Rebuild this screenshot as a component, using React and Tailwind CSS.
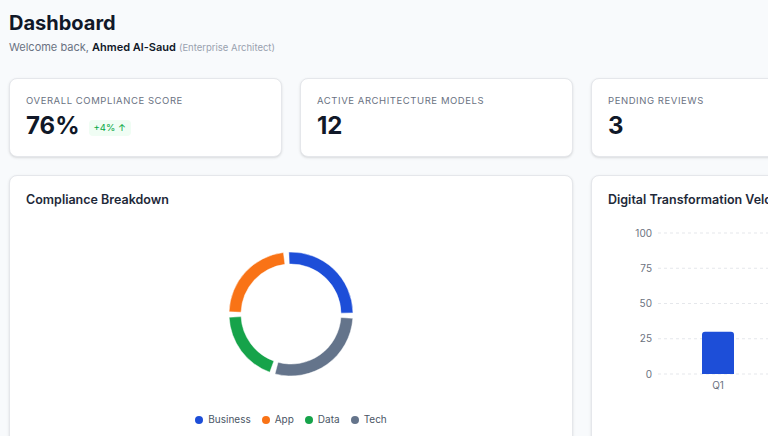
import React from 'react';

const stats = [
  { label: 'Overall Compliance Score', value: '76%', delta: '+4% ↑' },
  { label: 'Active Architecture Models', value: '12' },
  { label: 'Pending Reviews', value: '3' },
  { label: 'Open Risks', value: '5' }
];

// clockwise degrees from 12 o'clock
const slices = [
  { name: 'Business', color: '#1d4ed8', from: -2, to: 89 },
  { name: 'Tech', color: '#64748b', from: 94, to: 195 },
  { name: 'Data', color: '#16a34a', from: 200, to: 267 },
  { name: 'App', color: '#f97316', from: 272, to: 353 }
];

const legend = [
  { name: 'Business', color: 'bg-[#1d4ed8]' },
  { name: 'App', color: 'bg-[#f97316]' },
  { name: 'Data', color: 'bg-[#16a34a]' },
  { name: 'Tech', color: 'bg-[#64748b]' }
];

const velocity = [
  { q: 'Q1', v: 30 },
  { q: 'Q2', v: 45 },
  { q: 'Q3', v: 60 },
  { q: 'Q4', v: 78 }
];

const pt = (cx, cy, r, deg) => {
  const a = (deg * Math.PI) / 180;
  return [cx + r * Math.sin(a), cy - r * Math.cos(a)];
};

const arcPath = (cx, cy, ro, ri, from, to) => {
  const large = to - from > 180 ? 1 : 0;
  const [x1, y1] = pt(cx, cy, ro, from);
  const [x2, y2] = pt(cx, cy, ro, to);
  const [x3, y3] = pt(cx, cy, ri, to);
  const [x4, y4] = pt(cx, cy, ri, from);
  return `M${x1} ${y1} A${ro} ${ro} 0 ${large} 1 ${x2} ${y2} L${x3} ${y3} A${ri} ${ri} 0 ${large} 0 ${x4} ${y4} Z`;
};

const StatCard = ({ label, value, delta }) => (
  <div className="h-[79px] rounded-lg border border-gray-200 bg-white px-[16px] pt-[15px] shadow-sm">
    <div className="text-[9.5px] uppercase tracking-[0.06em] text-gray-500 leading-[14px]">{label}</div>
    <div className="mt-[2px] flex items-center gap-[9px]">
      <span className="text-[24px] font-bold leading-[32px] text-gray-900">{value}</span>
      {delta && (
        <span className="mt-[3px] rounded bg-green-50 px-[5px] py-[2px] text-[9.5px] leading-[12px] text-green-600">{delta}</span>
      )}
    </div>
  </div>
);

const Donut = () => (
  <svg width="140" height="140" viewBox="0 0 140 140">
    {slices.map((s) => (
      <path key={s.name} d={arcPath(70, 70, 62, 50, s.from, s.to)} fill={s.color} stroke="#fff" strokeWidth="0.5" />
    ))}
  </svg>
);

const VelocityChart = () => {
  const y = (v) => 154 - 1.41 * v;
  const ticks = [0, 25, 50, 75, 100];
  return (
    <svg width="530" height="190" viewBox="0 0 530 190" className="overflow-visible">
      {ticks.map((t) => (
        <g key={t}>
          <line x1="50" x2="530" y1={y(t)} y2={y(t)} stroke="#e5e7eb" strokeDasharray="3 3" />
          <text x="44" y={y(t) + 3.5} textAnchor="end" fontSize="10" fill="#6b7280">{t}</text>
        </g>
      ))}
      {velocity.map((d, i) => {
        const cx = 110 + i * 120;
        const top = y(d.v);
        return (
          <g key={d.q}>
            <path
              d={`M${cx - 16} 154 L${cx - 16} ${top + 3} Q${cx - 16} ${top} ${cx - 13} ${top} L${cx + 13} ${top} Q${cx + 16} ${top} ${cx + 16} ${top + 3} L${cx + 16} 154 Z`}
              fill="#1d4ed8"
            />
            <text x={cx} y="169" textAnchor="middle" fontSize="10" fill="#6b7280">{d.q}</text>
          </g>
        );
      })}
    </svg>
  );
};

const App = () => {
  return (
    <div className="h-[436px] w-[768px] overflow-hidden bg-[#f8fafc] font-['Inter',sans-serif]">
      <div className="w-[1164px] px-[9px] pt-[8px]">
        <h1 className="text-[20px] font-bold leading-[30px] text-gray-900">Dashboard</h1>
        <p className="mt-[1px] text-[11px] leading-[16px] text-gray-500">
          Welcome back, <span className="font-semibold text-gray-900">Ahmed Al-Saud</span>{' '}
          <span className="text-[9.5px] text-gray-400">(Enterprise Architect)</span>
        </p>

        <div className="mt-[22px] grid grid-cols-4 gap-[18px]">
          {stats.map((s) => (
            <StatCard key={s.label} {...s} />
          ))}
        </div>

        <div className="mt-[18px] grid grid-cols-2 gap-[18px]">
          <div className="h-[300px] rounded-lg border border-gray-200 bg-white px-[16px] pt-[15px] shadow-sm">
            <h2 className="text-[12.5px] font-semibold leading-[18px] text-gray-800">Compliance Breakdown</h2>
            <div className="mt-[35px] flex justify-center">
              <Donut />
            </div>
            <div className="mt-[28px] flex items-center justify-center gap-[11px] text-[10px] text-gray-600">
              {legend.map((l) => (
                <div key={l.name} className="flex items-center gap-[5px]">
                  <span className={`h-[8px] w-[8px] rounded-full ${l.color}`} />
                  <span>{l.name}</span>
                </div>
              ))}
            </div>
          </div>

          <div className="h-[300px] rounded-lg border border-gray-200 bg-white px-[16px] pt-[15px] shadow-sm">
            <h2 className="text-[12.5px] font-semibold leading-[18px] text-gray-800">Digital Transformation Velocity</h2>
            <div className="mt-[11px]">
              <VelocityChart />
            </div>
          </div>
        </div>
      </div>
    </div>
  );
};

export default App;
